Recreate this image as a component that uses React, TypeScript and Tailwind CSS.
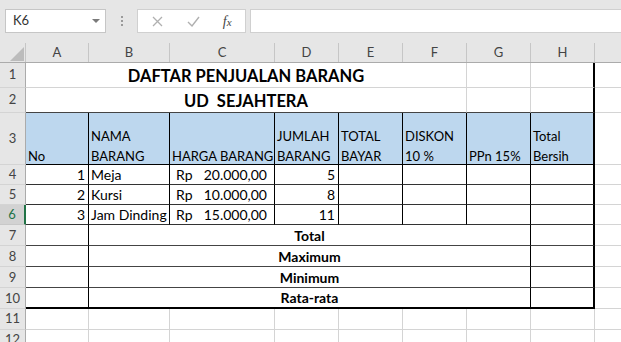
import React from "react";

const F = { fontFamily: "Lato, 'Liberation Sans', sans-serif" };

function RowHdr({ n, h, active }: { n: number; h: string; active?: boolean }) {
  return (
    <div
      className={
        active
          ? `${h} w-[26px] shrink-0 flex items-center justify-center bg-[#d2d2d2] text-[#217346] text-[13px] border-b border-b-[#c8c8c8] border-r-2 border-r-[#217346]`
          : `${h} w-[26px] shrink-0 flex items-center justify-center bg-[#e6e6e6] text-[#444] text-[13px] border-b border-b-[#d4d4d4] border-r border-r-[#ababab]`
      }
    >
      {n}
    </div>
  );
}

const LIGHT = "border-r border-b border-r-[#d4d4d4] border-b-[#d4d4d4]";

export default function App() {
  const cols = ["A", "B", "C", "D", "E", "F", "G", "H"];
  const colW = ["w-[63px]", "w-[81px]", "w-[105px]", "w-[64px]", "w-[64px]", "w-[64px]", "w-[64px]", "w-[64px]"];
  const data = [
    { no: "1", nama: "Meja", harga: "20.000,00", j: "5" },
    { no: "2", nama: "Kursi", harga: "10.000,00", j: "8" },
    { no: "3", nama: "Jam Dinding", harga: "15.000,00", j: "11" },
  ];
  const summary = ["Total", "Maximum", "Minimum", "Rata-rata"];
  return (
    <div className="w-[621px] h-[342px] overflow-hidden bg-white text-black" style={F}>
      {/* toolbar */}
      <div className="h-[43px] bg-[#e6e6e6] flex items-start pt-[9px] pl-[5px]">
        <div className="w-[101px] h-[24px] bg-white border border-[#c6c6c6] flex items-center justify-between pl-[7px] pr-[5px]">
          <span className="text-[13px] text-[#333]">K6</span>
          <svg width="8" height="5" viewBox="0 0 8 5"><path d="M0 0 L8 0 L4 4 Z" fill="#7a7a7a" /></svg>
        </div>
        <div className="w-[31px] h-[24px] flex flex-col items-center justify-center gap-[2px]">
          <div className="w-[2px] h-[2px] bg-[#9a9a9a]" />
          <div className="w-[2px] h-[2px] bg-[#9a9a9a]" />
          <div className="w-[2px] h-[2px] bg-[#9a9a9a]" />
        </div>
        <div className="w-[109px] h-[24px] bg-white border border-[#d0d0d0] flex items-center">
          <div className="w-[40px] flex justify-center">
            <svg width="11" height="11" viewBox="0 0 11 11"><path d="M1 1 L10 10 M10 1 L1 10" stroke="#b0b0b0" strokeWidth="1.3" /></svg>
          </div>
          <div className="w-[32px] flex justify-center">
            <svg width="13" height="11" viewBox="0 0 13 11"><path d="M1 6 L5 10 L12 1" stroke="#b0b0b0" strokeWidth="1.4" fill="none" /></svg>
          </div>
          <div className="w-[36px] flex justify-center">
            <span className="text-[14px] italic text-[#444]" style={{ fontFamily: "'Liberation Serif', serif" }}>
              f<span className="text-[11px]">x</span>
            </span>
          </div>
        </div>
        <div className="ml-[4px] flex-1 h-[24px] bg-white border border-[#d0d0d0] border-r-0" />
      </div>

      {/* column header */}
      <div className="h-[20px] flex bg-[#e6e6e6] border-b border-[#ababab]">
        <div className="w-[26px] shrink-0 relative border-r border-[#c6c6c6]">
          <svg className="absolute left-[10px] top-[4px]" width="14" height="14" viewBox="0 0 14 14"><path d="M14 0 L14 14 L0 14 Z" fill="#bcbcbc" /></svg>
        </div>
        {cols.map((c, i) => (
          <div key={c} className={`${colW[i]} shrink-0 flex items-center justify-center text-[13px] text-[#444] border-r border-[#c6c6c6]`}>
            {c}
          </div>
        ))}
        <div className="flex-1" />
      </div>

      {/* row 1 */}
      <div className="flex h-[25px]">
        <RowHdr n={1} h="h-[25px]" />
        <div className={`w-[441px] shrink-0 ${LIGHT} flex items-end justify-center font-bold text-[16.5px] leading-[21px]`}>
          DAFTAR PENJUALAN BARANG
        </div>
        <div className={`w-[64px] shrink-0 ${LIGHT}`} />
        <div className="w-[64px] shrink-0 border-b border-b-[#d4d4d4] border-r-2 border-r-black" />
        <div className="flex-1 border-b border-b-[#d4d4d4]" />
      </div>
      {/* row 2 */}
      <div className="flex h-[25px]">
        <RowHdr n={2} h="h-[25px]" />
        <div className="w-[441px] shrink-0 border-r border-r-[#d4d4d4] border-b border-b-[#444] flex items-end justify-center font-bold text-[16.5px] leading-[21px] whitespace-pre">
          {"UD  SEJAHTERA"}
        </div>
        <div className="w-[64px] shrink-0 border-r border-r-[#d4d4d4] border-b border-b-[#444]" />
        <div className="w-[64px] shrink-0 border-b border-b-[#444] border-r-2 border-r-black" />
        <div className="flex-1 border-b border-b-[#d4d4d4]" />
      </div>
      {/* row 3 */}
      <div className="flex h-[52px] text-[13px]">
        <RowHdr n={3} h="h-[52px]" />
        {[
          ["No"],
          ["NAMA", "BARANG"],
          ["HARGA BARANG"],
          ["JUMLAH", "BARANG"],
          ["TOTAL", "BAYAR"],
          ["DISKON", "10 %"],
          ["PPn 15%"],
          ["Total", "Bersih"],
        ].map((lines, i) => (
          <div
            key={i}
            className={`${colW[i]} shrink-0 bg-[#bdd7ee] border-b border-b-black ${i === 7 ? "border-r-2" : "border-r"} border-r-black flex flex-col justify-end pl-[2px] whitespace-nowrap overflow-hidden`}
          >
            <div className="translate-y-[2px]">
              {lines.map((l, k) => (
                <div key={k} className="leading-[20px]">{l}</div>
              ))}
            </div>
          </div>
        ))}
        <div className="flex-1 border-b border-b-[#d4d4d4]" />
      </div>
      {/* rows 4-6 */}
      {data.map((d, r) => (
        <div key={r} className="flex h-[20px] text-[14px] leading-[19px]">
          <RowHdr n={4 + r} h="h-[20px]" active={r === 2} />
          <div className="w-[63px] shrink-0 border-r border-r-black border-b border-b-[#333] flex items-end justify-end pr-[3px]">{d.no}</div>
          <div className="w-[81px] shrink-0 border-r border-r-black border-b border-b-[#333] flex items-end pl-[2px] whitespace-nowrap">{d.nama}</div>
          <div className="w-[105px] shrink-0 border-r border-r-black border-b border-b-[#333] flex items-end justify-between pl-[6px] pr-[7px]">
            <span>Rp</span>
            <span>{d.harga}</span>
          </div>
          <div className="w-[64px] shrink-0 border-r border-r-black border-b border-b-[#333] flex items-end justify-end pr-[3px]">{d.j}</div>
          <div className="w-[64px] shrink-0 border-r border-r-black border-b border-b-[#333]" />
          <div className="w-[64px] shrink-0 border-r border-r-black border-b border-b-[#333]" />
          <div className="w-[64px] shrink-0 border-r border-r-black border-b border-b-[#333]" />
          <div className="w-[64px] shrink-0 border-r-2 border-r-black border-b border-b-[#333]" />
          <div className="flex-1 border-b border-b-[#d4d4d4]" />
        </div>
      ))}
      {/* rows 7-10 */}
      {summary.map((s, r) => (
        <div key={s} className="flex h-[21px] text-[14px] leading-[19px]">
          <RowHdr n={7 + r} h="h-[21px]" />
          <div className={`w-[63px] shrink-0 border-r border-r-black ${r === 3 ? "border-b-2 border-b-black" : "border-b border-b-[#444]"}`} />
          <div className={`w-[442px] shrink-0 border-r border-r-black ${r === 3 ? "border-b-2 border-b-black" : "border-b border-b-[#444]"} flex items-end justify-center font-bold`}>
            {s}
          </div>
          <div className={`w-[64px] shrink-0 border-r-2 border-r-black ${r === 3 ? "border-b-2 border-b-black" : "border-b border-b-[#444]"}`} />
          <div className="flex-1 border-b border-b-[#d4d4d4]" />
        </div>
      ))}
      {/* rows 11-12 */}
      {[11, 12].map((n) => (
        <div key={n} className="flex h-[21px]">
          <RowHdr n={n} h="h-[21px]" />
          {colW.map((w, i) => (
            <div key={i} className={`${w} shrink-0 ${LIGHT}`} />
          ))}
          <div className="flex-1 border-b border-b-[#d4d4d4]" />
        </div>
      ))}
    </div>
  );
}
